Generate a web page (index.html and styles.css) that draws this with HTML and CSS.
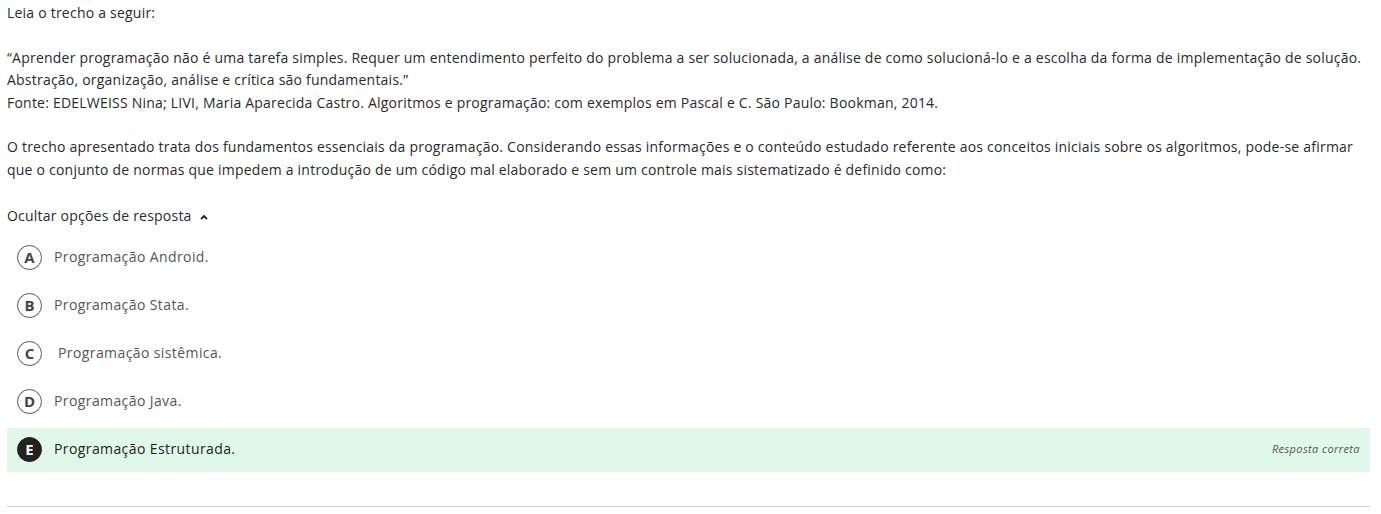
FILE: index.html
```html
<!DOCTYPE html>
<html lang="pt">
<head>
<meta charset="utf-8">
<link rel="stylesheet" href="styles.css">
</head>
<body>
<div class="page">
  <p class="para">Leia o trecho a seguir:</p>
  <p class="para">“Aprender programação não é uma tarefa simples. Requer um entendimento perfeito do problema a ser solucionada, a análise de como solucioná-lo e a escolha da forma de implementação de solução. Abstração, organização, análise e crítica são fundamentais.”<br>Fonte: EDELWEISS Nina; LIVI, Maria Aparecida Castro. Algoritmos e programação: com exemplos em Pascal e C. São Paulo: Bookman, 2014.</p>
  <p class="para">O trecho apresentado trata dos fundamentos essenciais da programação. Considerando essas informações e o conteúdo estudado referente aos conceitos iniciais sobre os algoritmos, pode-se afirmar que o conjunto de normas que impedem a introdução de um código mal elaborado e sem um controle mais sistematizado é definido como:</p>
  <div class="toggle">Ocultar opções de resposta
    <svg class="chev" width="8" height="6" viewBox="0 0 8 6"><path d="M1 5 L4 2 L7 5" fill="none" stroke="#222" stroke-width="1.8"/></svg>
  </div>
  <ul class="options">
    <li class="opt"><span class="letter">A</span><span class="otext">Programação Android.</span></li>
    <li class="opt"><span class="letter">B</span><span class="otext">Programação Stata.</span></li>
    <li class="opt"><span class="letter">C</span><span class="otext">&nbsp;Programação sistêmica.</span></li>
    <li class="opt"><span class="letter">D</span><span class="otext">Programação Java.</span></li>
    <li class="opt correct"><span class="letter">E</span><span class="otext">Programação Estruturada.</span><span class="status">Resposta correta</span></li>
  </ul>
  <hr class="rule">
</div>
</body>
</html>
```
FILE: styles.css
```css
html, body { margin: 0; padding: 0; background: #fff; }
.page {
  font-family: "Open Sans", "Noto Sans", sans-serif;
  font-size: 14px;
  letter-spacing: 0.22px;
  line-height: 22.5px;
  color: #2a2a2a;
  padding: 2px 11px 0 7px;
}
.para { margin: 0 0 22px 0; }
.toggle {
  display: flex;
  align-items: center;
  gap: 8px;
  padding-top: 2px;
}
.chev { margin-top: 1px; }
.options {
  list-style: none;
  margin: 8px 0 0 0;
  padding: 0;
  display: flex;
  flex-direction: column;
  gap: 4px;
}
.opt {
  height: 44px;
  display: flex;
  align-items: center;
  padding: 0 10px;
  color: #555;
  letter-spacing: 0.4px;
}
.letter {
  width: 23px;
  height: 23px;
  border: 1.5px solid #555;
  border-radius: 50%;
  display: flex;
  align-items: center;
  justify-content: center;
  font-weight: 700;
  font-size: 15px;
  letter-spacing: 0;
  color: #444;
  margin-right: 12px;
  flex: none;
}
.otext { flex: 1; }
.correct { background: #e0f8ea; color: #222; }
.correct .letter { background: #222; border-color: #222; color: #fff; }
.status {
  font-style: italic;
  font-size: 11px;
  color: #555;
  letter-spacing: 0.4px;
}
.rule {
  margin: 34px 0 0 0;
  border: 0;
  border-top: 1px solid #ccc;
}
```
